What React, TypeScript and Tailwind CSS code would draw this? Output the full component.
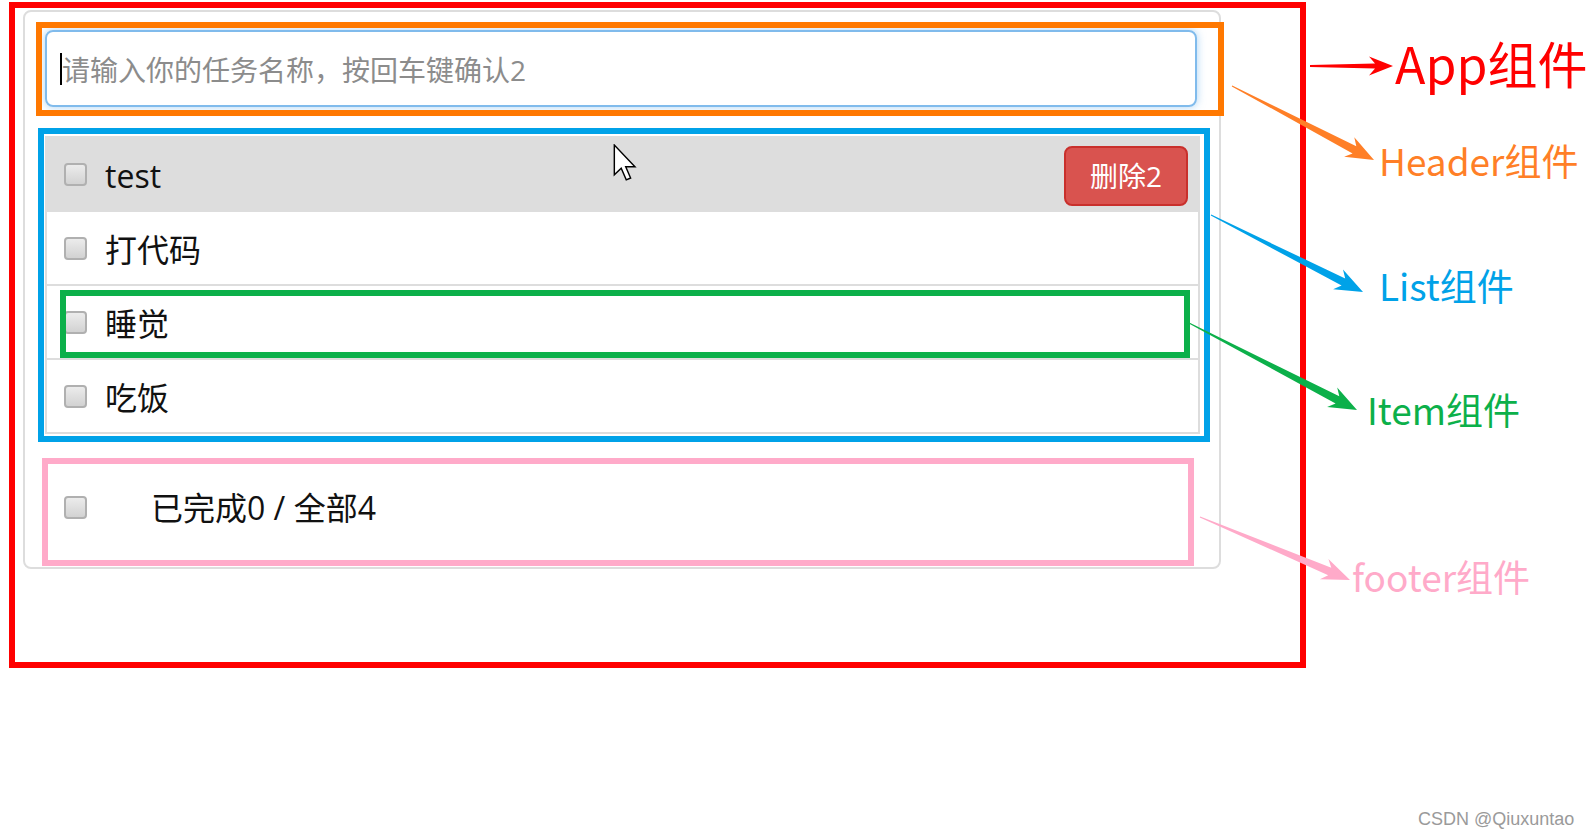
import React from "react";

type Arrow = { x1: number; y1: number; x2: number; y2: number; color: string; w0: number; w1: number; hl: number; hw: number };

function arrowPoints(a: Arrow): string {
  const dx = a.x2 - a.x1;
  const dy = a.y2 - a.y1;
  const len = Math.hypot(dx, dy);
  const ux = dx / len;
  const uy = dy / len;
  const nx = -uy;
  const ny = ux;
  const bx = a.x2 - ux * a.hl;
  const by = a.y2 - uy * a.hl;
  const jx = bx + ux * 6;
  const jy = by + uy * 6;
  const pts: [number, number][] = [
    [a.x1 + (nx * a.w0) / 2, a.y1 + (ny * a.w0) / 2],
    [jx + (nx * a.w1) / 2, jy + (ny * a.w1) / 2],
    [bx + (nx * a.hw) / 2, by + (ny * a.hw) / 2],
    [a.x2, a.y2],
    [bx - (nx * a.hw) / 2, by - (ny * a.hw) / 2],
    [jx - (nx * a.w1) / 2, jy - (ny * a.w1) / 2],
    [a.x1 - (nx * a.w0) / 2, a.y1 - (ny * a.w0) / 2],
  ];
  return pts.map((p) => `${p[0].toFixed(1)},${p[1].toFixed(1)}`).join(" ");
}

const arrows: Arrow[] = [
  { x1: 1310, y1: 66, x2: 1393, y2: 66, color: "#ff0000", w0: 2, w1: 5, hl: 24, hw: 19 },
  { x1: 1232, y1: 86, x2: 1374, y2: 160, color: "#ff7f27", w0: 1, w1: 8, hl: 28, hw: 22 },
  { x1: 1211, y1: 215, x2: 1363, y2: 292, color: "#00a2e8", w0: 1, w1: 8, hl: 28, hw: 22 },
  { x1: 1189, y1: 323, x2: 1357, y2: 410, color: "#0cb04a", w0: 1, w1: 8, hl: 28, hw: 22 },
  { x1: 1200, y1: 517, x2: 1350, y2: 580, color: "#ffaac9", w0: 1, w1: 8, hl: 28, hw: 22 },
];

function Checkbox() {
  return (
    <span className="block w-[23px] h-[23px] shrink-0 rounded-[4px] border-2 border-[#b0b0b0] bg-linear-to-b from-[#ececec] to-[#d2d2d2]" />
  );
}

const items = ["test", "打代码", "睡觉", "吃饭"];

export default function App() {
  const uiFont = { fontFamily: '"Open Sans", "Noto Sans CJK SC", sans-serif' };
  const noteFont = { fontFamily: '"Noto Sans CJK SC", sans-serif' };
  return (
    <div className="relative w-[1592px] h-[838px] bg-white overflow-hidden" style={uiFont}>
      {/* App panel */}
      <div className="pl-[23px] pt-[10px]">
        <div className="w-[1198px] h-[559px] rounded-[8px] border-2 border-[#dddddd] px-[20px] pt-[18px] pb-[18px] flex flex-col">
          {/* Header */}
          <div className="w-[1152px] h-[77px] shrink-0 rounded-[8px] border-2 border-[#80bbec] shadow-[0_0_8px_rgba(102,175,233,0.55)] flex items-center pl-[13px]">
            <span className="block w-[2px] h-[32px] bg-black" />
            <span className="text-[28px] leading-none text-[#8c8c8c] pt-[2px]">请输入你的任务名称，按回车键确认2</span>
          </div>
          {/* List */}
          <ul className="mt-[29px] w-[1155px] border-2 border-[#dddddd] shrink-0">
            {items.map((t, i) => (
              <li
                key={t}
                className={
                  "flex items-center pl-[17px] pr-[10px] " +
                  (i < 3 ? "h-[74px] border-b-2 border-[#dddddd] " : "h-[72px] ") +
                  (i === 0 ? "bg-[#dddddd]" : "bg-white")
                }
              >
                <Checkbox />
                <span className="ml-[18px] pt-[4px] text-[32px] leading-none text-[#111111]">{t}</span>
                {i === 0 && (
                  <button className="ml-auto mt-[4px] w-[124px] h-[60px] rounded-[8px] border-2 border-[#c9302c] bg-[#d9534f] text-white text-[28px] leading-none flex items-center justify-center">
                    删除2
                  </button>
                )}
              </li>
            ))}
          </ul>
          {/* Footer */}
          <div className="mt-[33px] h-[80px] shrink-0 flex items-center pl-[19px]">
            <Checkbox />
            <span className="ml-[64px] pt-[2px] text-[32px] leading-none text-[#111111]">已完成0 / 全部4</span>
          </div>
        </div>
      </div>

      {/* Annotation boxes */}
      <div className="absolute left-[9px] top-[2px] w-[1297px] h-[666px] border-[6px] border-[#ff0000] pointer-events-none" />
      <div className="absolute left-[36px] top-[22px] w-[1188px] h-[94px] border-[6px] border-[#ff7800] pointer-events-none" />
      <div className="absolute left-[38px] top-[128px] w-[1172px] h-[314px] border-[6px] border-[#00a2e8] pointer-events-none" />
      <div className="absolute left-[60px] top-[290px] w-[1130px] h-[68px] border-[6px] border-[#0cb04a] pointer-events-none" />
      <div className="absolute left-[42px] top-[458px] w-[1152px] h-[108px] border-[6px] border-[#ffaac9] pointer-events-none" />

      {/* Arrows */}
      <svg className="absolute left-0 top-0 pointer-events-none" width={1592} height={838}>
        {arrows.map((a, i) => (
          <polygon key={i} points={arrowPoints(a)} fill={a.color} />
        ))}
      </svg>

      {/* Mouse cursor */}
      <svg className="absolute left-[613px] top-[144px]" width={24} height={38} viewBox="0 0 13 21">
        <path d="M0.6,0.6 L0.6,17 L4.4,13.4 L7.2,19.8 L9.6,18.8 L6.9,12.6 L12,12.6 Z" fill="#ffffff" stroke="#000000" strokeWidth={0.8} strokeLinejoin="miter" />
      </svg>

      {/* Labels */}
      <span className="absolute left-[1395px] top-[37px] text-[50px] leading-none text-[#ff0000] whitespace-nowrap" style={noteFont}>App组件</span>
      <span className="absolute left-[1379px] top-[142px] text-[37px] leading-none text-[#ff7f27] whitespace-nowrap" style={noteFont}>Header组件</span>
      <span className="absolute left-[1379px] top-[267px] text-[37px] leading-none text-[#00a2e8] whitespace-nowrap" style={noteFont}>List组件</span>
      <span className="absolute left-[1367px] top-[391px] text-[37px] leading-none text-[#0cb04a] whitespace-nowrap" style={noteFont}>Item组件</span>
      <span className="absolute left-[1352px] top-[558px] text-[37px] leading-none text-[#ffaac9] whitespace-nowrap" style={noteFont}>footer组件</span>
      <span
        className="absolute left-[1418px] top-[810px] text-[18px] leading-none text-[#9a9a9a] whitespace-nowrap [text-shadow:0_0_1px_#ffffff]"
        style={{ fontFamily: '"Liberation Sans", Arial, sans-serif' }}
      >
        CSDN @Qiuxuntao
      </span>
    </div>
  );
}
